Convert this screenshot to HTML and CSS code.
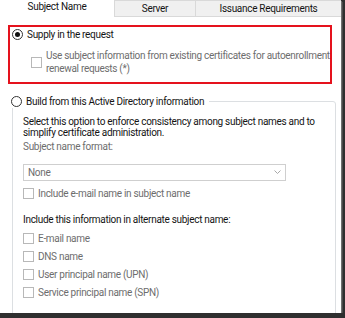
FILE: index.html
```html
<!DOCTYPE html>
<html lang="en">
<head>
  <meta charset="UTF-8">
  <title>Subject Name</title>
  <link rel="stylesheet" href="styles.css">
</head>
<body>
  <div class="window">
    <div class="tabs">
      <div class="tab active">Subject Name</div>
      <div class="tab server">Server</div>
      <div class="tab issuance">Issuance Requirements</div>
    </div>

    <div class="panel">
      <div class="highlight">
        <div class="radio-row"><span class="radio checked"></span><span>Supply in the request</span></div>
        <div class="check-row disabled renewal">
          <span class="check"></span>
          <span>Use subject information from existing certificates for autoenrollment<br>renewal requests (*)</span>
        </div>
      </div>

      <fieldset class="group">
        <legend><span class="radio-row"><span class="radio"></span><span>Build from this Active Directory information</span></span></legend>
        <div class="group-body">
          <p class="intro">Select this option to enforce consistency among subject names and to<br>simplify certificate administration.</p>
          <div class="field-label disabled">Subject name format:</div>
          <div class="select disabled">
            <span>None</span>
            <svg width="7" height="5" viewBox="0 0 7 5"><polyline points="0.5,0.5 3.5,3.5 6.5,0.5" fill="none" stroke="#a8a8a8" stroke-width="1"/></svg>
          </div>
          <div class="check-row disabled email"><span class="check"></span><span>Include e-mail name in subject name</span></div>
          <div class="alt-label">Include this information in alternate subject name:</div>
          <div class="check-list disabled">
            <div class="check-row"><span class="check"></span><span>E-mail name</span></div>
            <div class="check-row"><span class="check"></span><span>DNS name</span></div>
            <div class="check-row"><span class="check"></span><span>User principal name (UPN)</span></div>
            <div class="check-row"><span class="check"></span><span>Service principal name (SPN)</span></div>
          </div>
        </div>
      </fieldset>
    </div>
  </div>
</body>
</html>
```

FILE: styles.css
```css
body {
  margin: 0;
  background: #2f2f2f;
  font-family: Roboto, "Liberation Sans", sans-serif;
  font-size: 10px;
  letter-spacing: -0.3px;
  color: #141414;
}
.window {
  width: 341px;
  height: 313px;
  background: #fff;
  overflow: hidden;
  box-shadow: 1px 1px 0 #707070, 2px 2px 0 #4a4a4a;
}
.tabs {
  display: flex;
  height: 17px;
}
.tab {
  box-sizing: border-box;
  display: flex;
  align-items: center;
  justify-content: center;
  background: #f0f0f0;
  border: 1px solid #d9d9d9;
  border-right: none;
}
.tab.active {
  width: 114px;
  background: #fff;
  border: none;
  align-items: flex-start;
  padding-top: 1px;
}
.tab.server {
  width: 81px;
}
.tab.issuance {
  width: 146px;
}
.panel {
  padding-top: 8px;
}
.highlight {
  box-sizing: border-box;
  width: 324px;
  margin-left: 8px;
  border: 2px solid #e5121d;
  padding: 0 0 7px 2px;
}
.radio-row {
  display: flex;
  align-items: center;
  gap: 4px;
  height: 14px;
}
.radio {
  box-sizing: border-box;
  width: 11px;
  height: 11px;
  border: 1px solid #333;
  border-radius: 50%;
  display: flex;
  align-items: center;
  justify-content: center;
  flex: none;
}
.radio.checked::after {
  content: "";
  width: 5px;
  height: 5px;
  border-radius: 50%;
  background: #111;
}
.check-row {
  display: flex;
  align-items: center;
  gap: 4px;
  line-height: 13px;
  white-space: nowrap;
}
.check {
  box-sizing: border-box;
  width: 11px;
  height: 11px;
  border: 1px solid #b8b8b8;
  flex: none;
}
.disabled {
  color: #6d6d6d;
}
.renewal {
  margin: 8px 0 0 19px;
}
.group {
  box-sizing: border-box;
  width: 324px;
  margin: 10px 0 0 12px;
  border: 1px solid #dcdfe2;
  border-radius: 3px;
  padding: 0 0 40px 0;
  min-inline-size: 0;
}
.group legend {
  margin-left: -2px;
  padding: 0 5px 0 0;
}
.group-body {
  padding: 8px 0 0 10px;
}
.intro {
  margin: 0;
  line-height: 11px;
  white-space: nowrap;
}
.field-label {
  margin-top: 3px;
  line-height: 12px;
}
.select {
  box-sizing: border-box;
  width: 263px;
  height: 17px;
  margin-top: 11px;
  border: 1px solid #cfcfcf;
  display: flex;
  align-items: center;
  justify-content: space-between;
  padding: 0 4px;
}
.email {
  margin-top: 6px;
}
.alt-label {
  margin-top: 13px;
  line-height: 13px;
}
.check-list {
  margin-top: 3px;
  display: flex;
  flex-direction: column;
}
.check-list .check-row {
  height: 18px;
}
```
